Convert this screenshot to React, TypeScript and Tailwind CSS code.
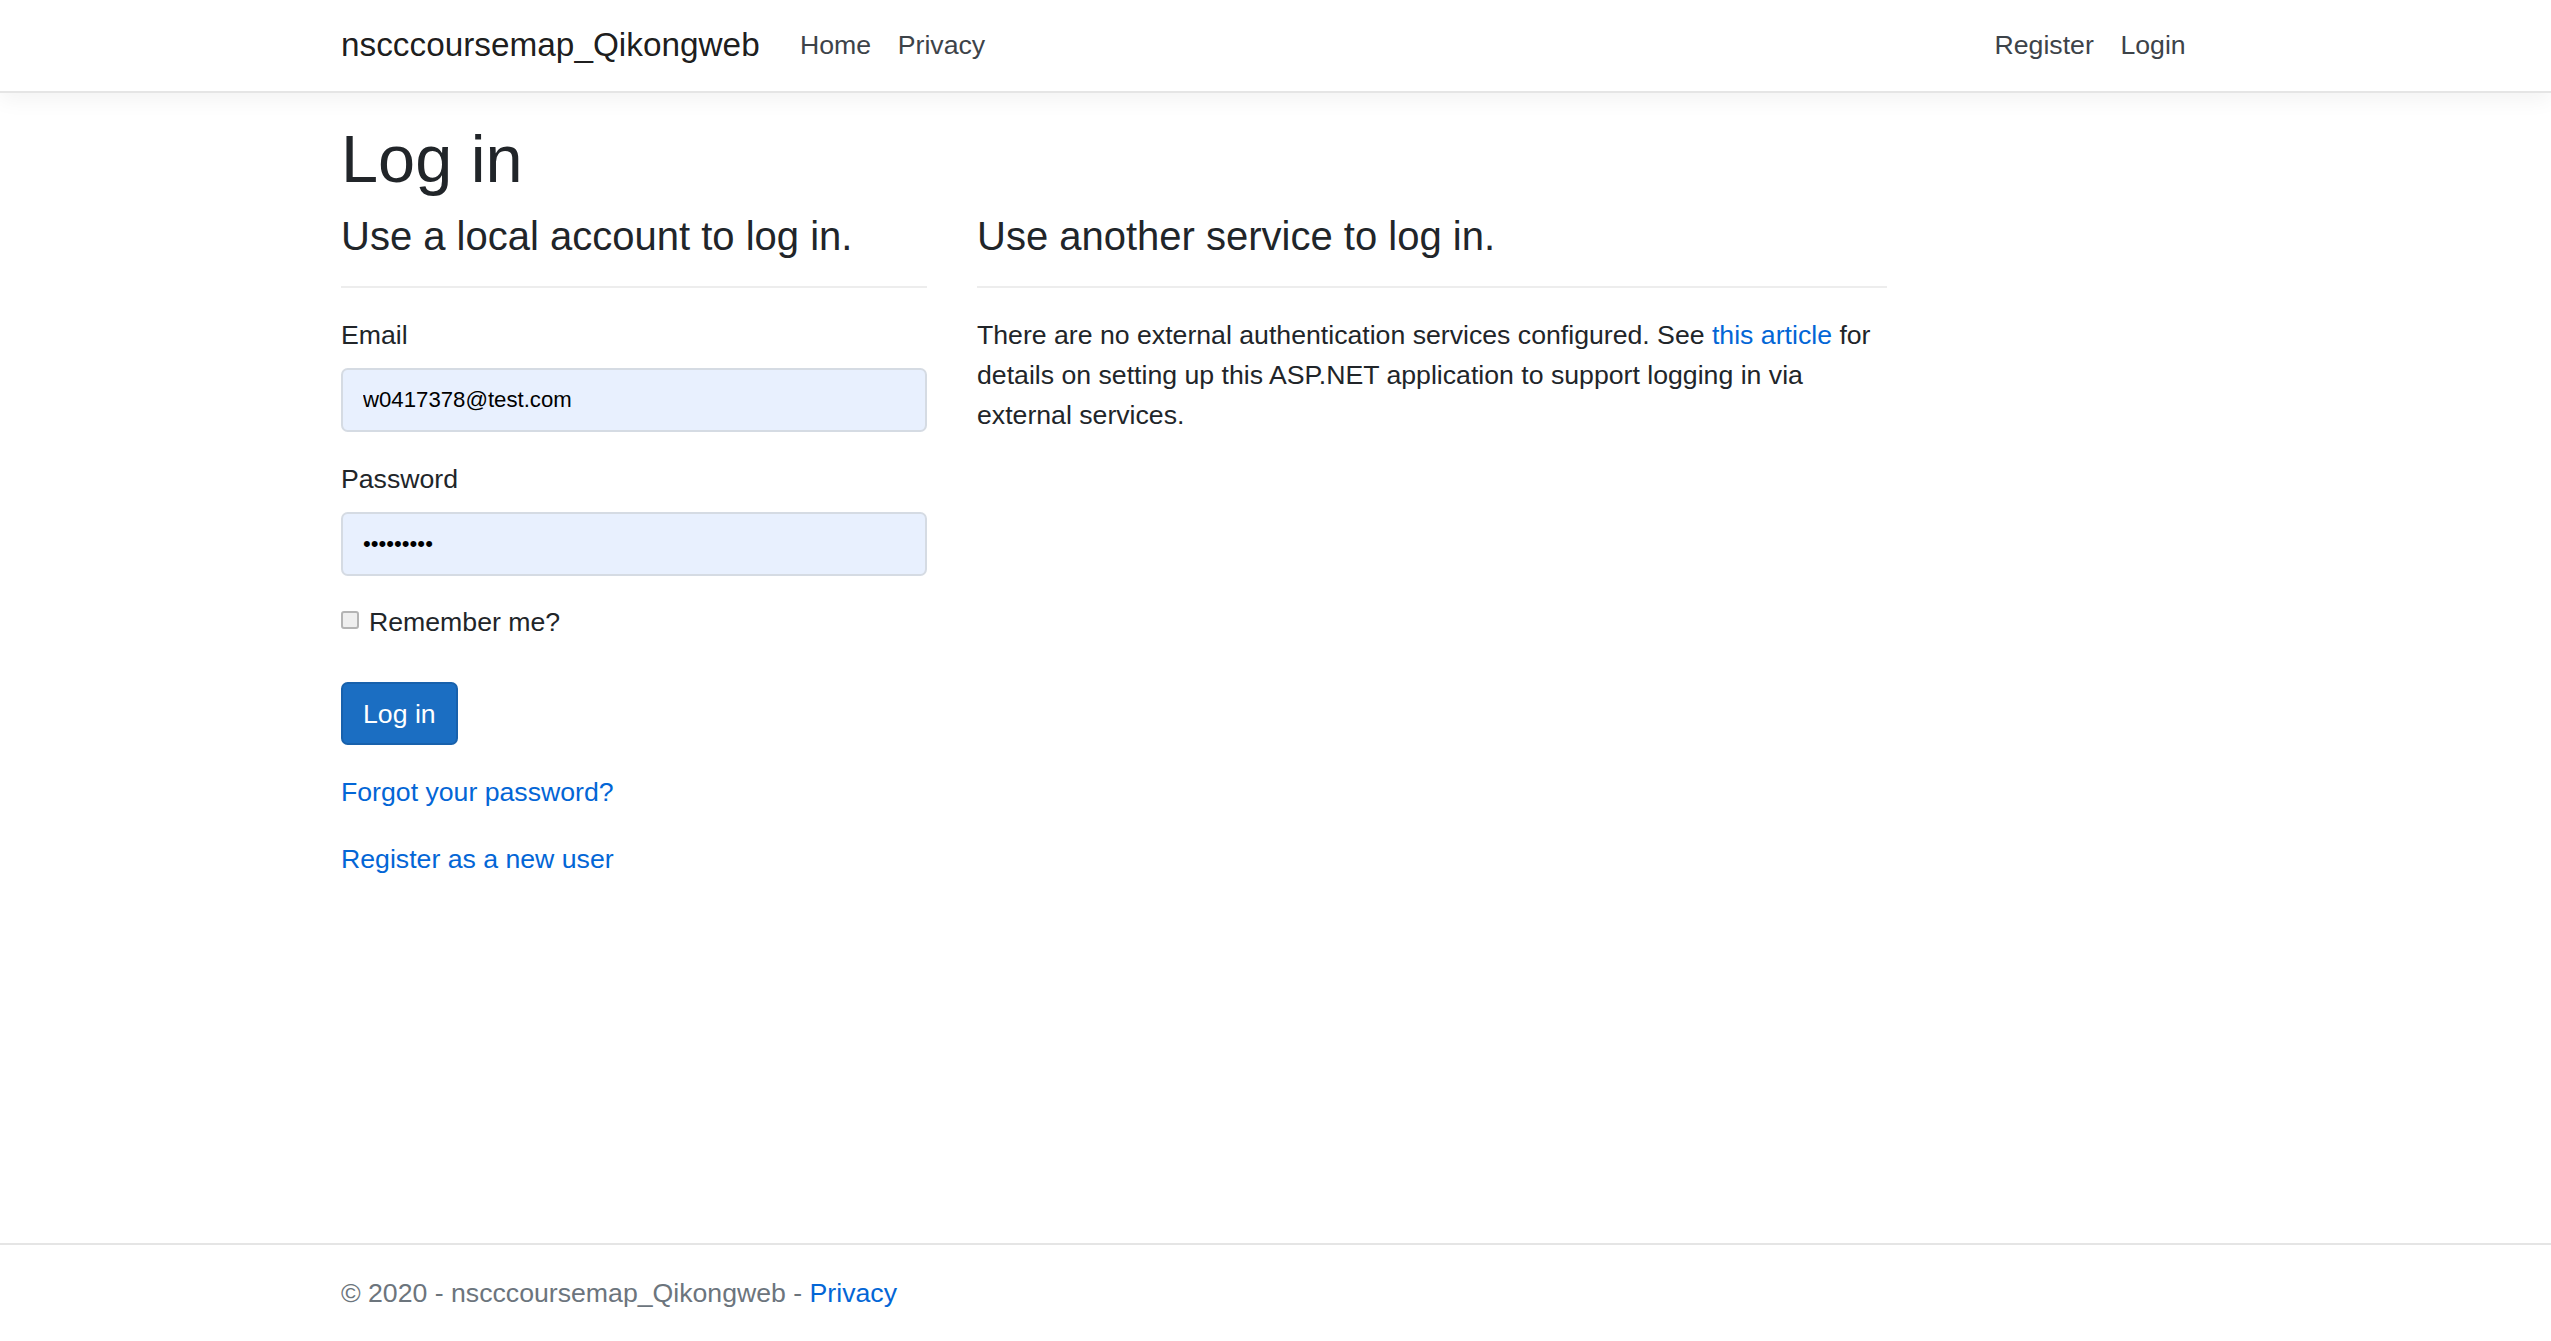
export default function App() {
  return (
    <div className="flex min-h-screen flex-col bg-white font-['Liberation_Sans',Arial,sans-serif] text-[26.67px] leading-[40px] text-[#212529]">
      {/* Navbar */}
      <nav className="h-[93px] border-b-2 border-[#e5e5e5] bg-white shadow-[0_7px_20px_rgba(0,0,0,0.05)]">
        <div className="ml-[341px] flex h-full w-[1858px] items-center pb-[2px]">
          <a href="#" className="mr-[27px] text-[33.33px] leading-[50px] text-[rgba(0,0,0,0.9)]">
            nscccoursemap_Qikongweb
          </a>
          <ul className="flex">
            <li>
              <a href="#" className="px-[13.33px] text-[#3d4349]">
                Home
              </a>
            </li>
            <li>
              <a href="#" className="px-[13.33px] text-[#3d4349]">
                Privacy
              </a>
            </li>
          </ul>
          <ul className="ml-auto flex">
            <li>
              <a href="#" className="px-[13.33px] text-[#3d4349]">
                Register
              </a>
            </li>
            <li>
              <a href="#" className="px-[13.33px] text-[#3d4349]">
                Login
              </a>
            </li>
          </ul>
        </div>
      </nav>

      {/* Main */}
      <main className="flex-1">
        <div className="ml-[341px] w-[1858px] pt-[26px]">
          <h1 className="mb-[13px] text-[66.67px] font-normal leading-[80px]">Log in</h1>
          <div className="flex">
            {/* Local account */}
            <section className="mr-[50px] w-[586px]">
              <h4 className="mb-[13px] text-[40px] font-normal leading-[48px]">Use a local account to log in.</h4>
              <hr className="mt-[26px] mb-[27px] border-t-2 border-[#ededed]" />
              <form onSubmit={(e) => e.preventDefault()}>
                <div className="mb-[26.67px]">
                  <label className="mb-[13px] block">Email</label>
                  <input
                    type="email"
                    defaultValue="w0417378@test.com"
                    className="block h-[64px] w-full rounded-[6.67px] border-2 border-[#d5dbe3] bg-[#e8f0fe] px-[20px] text-[22.2px] text-black outline-none"
                  />
                </div>
                <div className="mb-[26.67px]">
                  <label className="mb-[13px] block">Password</label>
                  <input
                    type="password"
                    defaultValue="123456789"
                    className="block h-[64px] w-full rounded-[6.67px] border-2 border-[#d5dbe3] bg-[#e8f0fe] px-[20px] text-[22.2px] text-black outline-none"
                  />
                </div>
                <div className="mb-[40px]">
                  <label className="flex h-[40px] items-center">
                    <input
                      type="checkbox"
                      className="mr-[10px] h-[18px] w-[18px] -translate-y-[2px] appearance-none rounded-[3px] border-2 border-[#b4b4b4] bg-[#efefef]"
                    />
                    Remember me?
                  </label>
                </div>
                <div className="mb-[26.67px]">
                  <button
                    type="submit"
                    className="h-[63px] rounded-[6.67px] border-2 border-[#1861ac] bg-[#1b6ec2] px-[20px] text-[26.67px] text-white"
                  >
                    Log in
                  </button>
                </div>
                <div>
                  <p className="mb-[26.67px]">
                    <a href="#" className="text-[#0366d6]">
                      Forgot your password?
                    </a>
                  </p>
                  <p className="mb-[26.67px]">
                    <a href="#" className="text-[#0366d6]">
                      Register as a new user
                    </a>
                  </p>
                </div>
              </form>
            </section>

            {/* External services */}
            <section className="w-[910px]">
              <h4 className="mb-[13px] text-[40px] font-normal leading-[48px]">Use another service to log in.</h4>
              <hr className="mt-[26px] mb-[27px] border-t-2 border-[#ededed]" />
              <p>
                There are no external authentication services configured. See{" "}
                <a href="#" className="text-[#0366d6]">
                  this article
                </a>{" "}
                for details on setting up this ASP.NET application to support logging in via external services.
              </p>
            </section>
          </div>
        </div>
      </main>

      {/* Footer */}
      <footer className="h-[98px] border-t-2 border-[#e5e5e5] text-[#6c757d]">
        <div className="ml-[341px] w-[1858px] whitespace-nowrap leading-[96px]">
          © 2020 - nscccoursemap_Qikongweb -{" "}
          <a href="#" className="text-[#0366d6]">
            Privacy
          </a>
        </div>
      </footer>
    </div>
  );
}
